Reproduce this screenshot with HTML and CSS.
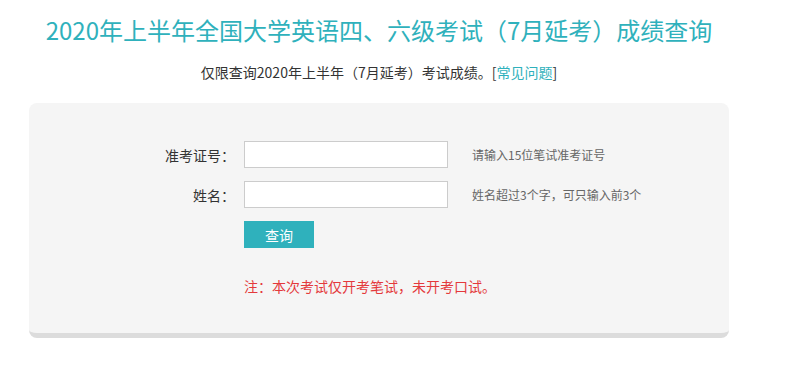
FILE: index.html
```html
<!DOCTYPE html>
<html lang="zh-CN">
<head>
  <meta charset="UTF-8" />
  <title>全国大学英语四、六级考试成绩查询</title>
  <link rel="stylesheet" href="styles.css">
</head>
<body>
  <div class="container">
    <h1 class="title">2020年上半年全国大学英语四、六级考试（7月延考）成绩查询</h1>
    <p class="intro">仅限查询2020年上半年（7月延考）考试成绩。[<a href="#">常见问题</a>]</p>

    <!-- 查询表单 -->
    <div class="card">
      <div class="row">
        <label class="label" for="zkzh">准考证号：</label>
        <input class="field" type="text" id="zkzh">
        <span class="hint">请输入15位笔试准考证号</span>
      </div>
      <div class="row">
        <label class="label" for="xm">姓名：</label>
        <input class="field" type="text" id="xm">
        <span class="hint">姓名超过3个字，可只输入前3个</span>
      </div>
      <div class="row">
        <span class="label"></span>
        <button class="btn">查询</button>
      </div>
      <p class="note">注：本次考试仅开考笔试，未开考口试。</p>
    </div>
  </div>
</body>
</html>
```

FILE: styles.css
```css
body {
  margin: 0;
  background: #fff;
  color: #333;
  font-family: "Noto Sans CJK SC", "Noto Sans", sans-serif;
  font-size: 14px;
}
.container {
  width: 700px;
  margin-left: 29px;
}
.title {
  margin: 0;
  padding-top: 12px;
  height: 36px;
  line-height: 36px;
  font-size: 24px;
  font-weight: normal;
  color: #2fb1bc;
  text-align: center;
  white-space: nowrap;
}
.intro {
  margin: 14px 0 0;
  line-height: 20px;
  text-align: center;
  color: #333;
}
.intro a {
  color: #2fb1bc;
  text-decoration: none;
}
.card {
  margin-top: 21px;
  background: #f5f5f5;
  border-radius: 8px;
  border-bottom: 5px solid #dcdcdc;
  padding: 38px 0 0;
  height: 192px;
}
.row {
  display: flex;
  align-items: center;
  margin-bottom: 13px;
}
.label {
  width: 206px;
  text-align: right;
  color: #333;
}
.field {
  box-sizing: border-box;
  width: 204px;
  height: 27px;
  margin: 0 0 0 9px;
  padding: 0 6px;
  border: 1px solid #ccc;
  background: #fff;
  font-size: 14px;
}
.hint {
  margin-left: 24px;
  font-size: 12px;
  color: #666;
}
.btn {
  width: 70px;
  height: 27px;
  margin-left: 9px;
  padding: 0;
  border: none;
  background: #2fb1bc;
  color: #fff;
  font-family: inherit;
  font-size: 14px;
  cursor: pointer;
}
.note {
  margin: 28px 0 0 215px;
  line-height: 20px;
  color: #e4393c;
}
```
